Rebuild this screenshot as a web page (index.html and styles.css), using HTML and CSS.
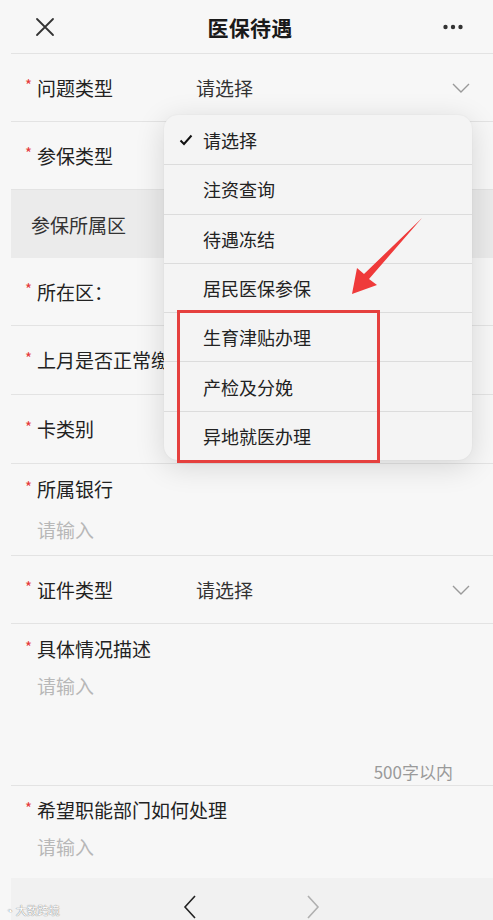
FILE: index.html
```html
<!DOCTYPE html>
<html lang="zh-CN">
<head>
<meta charset="utf-8">
<title>医保待遇</title>
<link rel="stylesheet" href="styles.css">
</head>
<body>
<div class="screen">
  <header class="topbar">
    <span class="close"><svg width="20" height="20" viewBox="0 0 20 20"><path d="M2 2 L18 18 M18 2 L2 18" stroke="#333" stroke-width="1.8" fill="none" stroke-linecap="round"/></svg></span>
    <h1 class="title">医保待遇</h1>
    <span class="more"><svg width="20" height="6" viewBox="0 0 20 6"><circle cx="2.5" cy="3" r="2.2" fill="#333"/><circle cx="10" cy="3" r="2.2" fill="#333"/><circle cx="17.5" cy="3" r="2.2" fill="#333"/></svg></span>
  </header>

  <div class="row">
    <div class="lead"><span class="req">*</span><span class="label">问题类型</span></div>
    <span class="value">请选择</span>
    <svg class="chev" width="18" height="10" viewBox="0 0 18 10"><path d="M1 1 L9 9 L17 1" stroke="#9a9a9a" stroke-width="1.4" fill="none"/></svg>
  </div>
  <div class="row">
    <div class="lead"><span class="req">*</span><span class="label">参保类型</span></div>
  </div>
  <div class="section">参保所属区</div>
  <div class="row">
    <div class="lead"><span class="req">*</span><span class="label">所在区：</span></div>
  </div>
  <div class="row tall">
    <div class="lead wide"><span class="req">*</span><span class="label">上月是否正常缴费</span></div>
  </div>
  <div class="row tall">
    <div class="lead"><span class="req">*</span><span class="label">卡类别</span></div>
  </div>
  <div class="block bank">
    <div class="lead wide"><span class="req">*</span><span class="label">所属银行</span></div>
    <div class="placeholder">请输入</div>
  </div>
  <div class="row">
    <div class="lead"><span class="req">*</span><span class="label">证件类型</span></div>
    <span class="value">请选择</span>
    <svg class="chev" width="18" height="10" viewBox="0 0 18 10"><path d="M1 1 L9 9 L17 1" stroke="#9a9a9a" stroke-width="1.4" fill="none"/></svg>
  </div>
  <div class="block desc">
    <div class="lead wide"><span class="req">*</span><span class="label">具体情况描述</span></div>
    <div class="placeholder">请输入</div>
    <div class="counter">500字以内</div>
  </div>
  <div class="block hope">
    <div class="lead wide"><span class="req">*</span><span class="label">希望职能部门如何处理</span></div>
    <div class="placeholder">请输入</div>
  </div>
  <nav class="bottombar">
    <svg width="14" height="24" viewBox="0 0 14 24"><path d="M12 1 L2 12 L12 23" stroke="#222" stroke-width="1.6" fill="none"/></svg>
    <svg width="14" height="24" viewBox="0 0 14 24"><path d="M2 1 L12 12 L2 23" stroke="#b0b0b0" stroke-width="1.6" fill="none"/></svg>
  </nav>
</div>

<ul class="dropdown">
  <li class="item checked"><svg class="check" width="14" height="12" viewBox="0 0 14 12"><path d="M1.5 6.5 L5 10 L12.5 1.5" stroke="#111" stroke-width="2" fill="none"/></svg>请选择</li>
  <li class="item">注资查询</li>
  <li class="item">待遇冻结</li>
  <li class="item">居民医保参保</li>
  <li class="item">生育津贴办理</li>
  <li class="item">产检及分娩</li>
  <li class="item">异地就医办理</li>
</ul>
<div class="highlight"></div>
<svg class="arrow" width="100" height="100" viewBox="340 210 100 100"><polygon points="352,294 357,268 364,274 422,218 369,279 377,285" fill="#ef3a3a"/></svg>
<div class="watermark"><span class="wb">◔</span>大数跨境</div>
</body>
</html>
```

FILE: styles.css
```css
* { box-sizing: border-box; }
html, body { margin: 0; padding: 0; }
body {
  width: 493px;
  height: 920px;
  overflow: hidden;
  background: #f7f7f7;
  font-family: "Noto Sans CJK SC", "Noto Sans", sans-serif;
  color: #222;
  position: relative;
}
.screen { margin-left: 11px; }

.topbar {
  height: 54px;
  display: grid;
  grid-template-columns: 1fr auto 1fr;
  align-items: center;
  border-bottom: 1px solid #e3e3e3;
  padding: 0 30px 0 24px;
}
.close { display: flex; }
.title {
  margin: 0;
  font-size: 21px;
  font-weight: 600;
  color: #1a1a1a;
  letter-spacing: 0.3px;
  transform: translateX(1px);
}
.more { display: flex; justify-content: flex-end; }

.row {
  height: 68px;
  display: flex;
  align-items: center;
  border-bottom: 1px solid #e3e3e3;
  padding: 0 23px 0 14px;
}
.row.tall { height: 69px; }
.lead {
  width: 171px;
  display: flex;
  align-items: center;
  flex: none;
}
.lead.wide { width: auto; white-space: nowrap; }
.req {
  color: #e53a3a;
  font-size: 15px;
  width: 12px;
  line-height: 1;
  transform: translateY(-3px);
}
.label { font-size: 19px; line-height: 24px; color: #222; }
.value { font-size: 19px; line-height: 24px; color: #333; flex: 1; }
.chev { flex: none; }

.section {
  height: 68px;
  background: #ebebeb;
  display: flex;
  align-items: center;
  padding-left: 20px;
  font-size: 19px;
  color: #333;
}

.block {
  border-bottom: 1px solid #e3e3e3;
  padding: 13px 23px 14px 14px;
}
.placeholder {
  font-size: 19px;
  line-height: 24px;
  color: #b8b8b8;
  padding-left: 12px;
  margin-top: 17px;
}
.bank { height: 92px; }
.desc { height: 162px; padding-top: 13px; display: flex; flex-direction: column; padding-bottom: 1px; }
.desc .placeholder { margin-top: 13px; }
.counter {
  margin-top: auto;
  align-self: flex-end;
  font-size: 17px;
  line-height: 24px;
  color: #9a9a9a;
  margin-right: 17px;
}
.hope { height: 92px; padding-top: 12px; border-bottom: none; }
.hope .placeholder { margin-top: 13px; }

.bottombar {
  height: 60px;
  background: #f1f1f1;
  display: flex;
  gap: 109px;
  padding: 17px 0 0 172px;
  align-items: flex-start;
}

.dropdown {
  position: absolute;
  left: 164px;
  top: 115px;
  width: 308px;
  margin: 0;
  padding: 0;
  list-style: none;
  background: #f4f4f4;
  border-radius: 14px;
  box-shadow: 0 6px 30px rgba(0,0,0,0.14), 0 0 2px rgba(0,0,0,0.06);
  overflow: hidden;
}
.item {
  height: 49.3px;
  display: flex;
  align-items: center;
  padding-left: 39px;
  font-size: 18px;
  color: #222;
  border-top: 1px solid #dcdcdc;
  position: relative;
}
.item:first-child { border-top: none; }
.check { position: absolute; left: 15px; top: 19px; }

.highlight {
  position: absolute;
  left: 177px;
  top: 310px;
  width: 203px;
  height: 153px;
  border: 3px solid #e5403e;
}
.arrow { position: absolute; left: 340px; top: 210px; }

.watermark {
  position: absolute;
  left: 6px;
  top: 902px;
  font-size: 11px;
  color: #fff;
  text-shadow: 0 0 1px #888, 0 0 1px #888;
  display: flex;
  align-items: center;
  gap: 3px;
}
.wb { font-size: 11px; }
```
